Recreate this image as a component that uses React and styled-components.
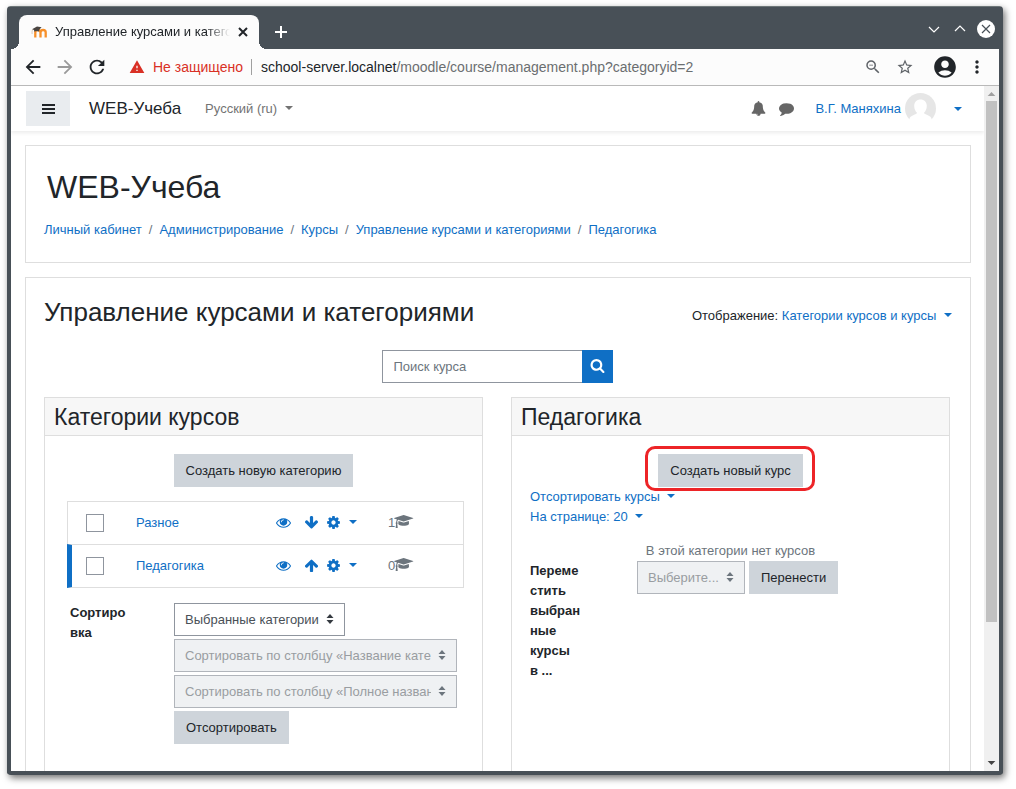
import React, { useState } from 'react';
import styled, { createGlobalStyle, css } from 'styled-components';
import {
  MdAccountCircle,
  MdAdd,
  MdArrowBack,
  MdArrowForward,
  MdMoreVert,
  MdRefresh,
  MdStarBorder,
  MdWarning,
  MdZoomOut,
} from 'react-icons/md';

const COLORS = {
  frame: '#485057',
  chrome: '#fcfcfc',
  text: '#212529',
  link: '#0f6fc5',
  muted: '#6c757d',
  button: '#ced4da',
  border: '#dedede',
  inputBorder: '#8f959e',
};

const ICON_PATHS = {
  bell:
    'M912 1696q0-16-16-16-59 0-101.5-42.5t-42.5-101.5q0-16-16-16t-16 16q0 73 51.5 124.5t124.5 51.5q16 0 16-16zm816-288q0 52-38 90t-90 38h-448q0 106-75 181t-181 75-181-75-75-181h-448q-52 0-90-38t-38-90q50-42 91-88t85-119.5 74.5-158.5 50-206 19.5-260q0-152 117-282.5t307-158.5q-8-19-8-39 0-40 28-68t68-28 68 28 28 68q0 20-8 39 190 28 307 158.5t117 282.5q0 139 19.5 260t50 206 74.5 158.5 85 119.5 91 88z',
  comment:
    'M1792 896q0 174-120 321.5t-326 233-450 85.5q-70 0-145-8-198 175-460 242-49 14-114 22-17 2-30.5-9t-17.5-29v-1q-3-4-.5-12t2-10 4.5-9.5l6-9 7-8.5 8-9q7-8 31-34.5t34.5-38 31-39.5 32.5-51 27-59 26-76q-157-89-247.5-220t-90.5-281q0-130 71-248.5t191-204.5 286-136.5 348-50.5q244 0 450 85.5t326 233 120 321.5z',
  eye:
    'M1664 960q-152-236-381-353 61 104 61 225 0 185-131.5 316.5t-316.5 131.5-316.5-131.5-131.5-316.5q0-121 61-225-229 117-381 353 133 205 333.5 326.5t434.5 121.5 434.5-121.5 333.5-326.5zm-720-384q0-20-14-34t-34-14q-125 0-214.5 89.5t-89.5 214.5q0 20 14 34t34 14 34-14 14-34q0-86 61-147t147-61q20 0 34-14t14-34zm848 384q0 34-20 69-140 230-376.5 368.5t-499.5 138.5-499.5-139-376.5-368q-20-35-20-69t20-69q140-229 376.5-368t499.5-139 499.5 139 376.5 368q20 35 20 69z',
  down:
    'M1675 832q0 53-37 90l-651 652q-39 37-91 37-53 0-90-37l-651-652q-38-36-38-90 0-53 38-91l74-75q39-37 91-37 53 0 90 37l294 294v-704q0-52 38-90t90-38h128q52 0 90 38t38 90v704l294-294q37-37 90-37 52 0 91 37l75 75q37 39 37 91z',
  up:
    'M1675 971q0 51-37 90l-75 75q-38 38-91 38-54 0-90-38l-294-293v704q0 52-37.5 84.5t-90.5 32.5h-128q-53 0-90.5-32.5t-37.5-84.5v-704l-294 293q-36 38-90 38t-90-38l-75-75q-38-38-38-90 0-53 38-91l651-651q35-37 90-37 54 0 91 37l651 651q37 39 37 91z',
  cog:
    'M1152 896q0-106-75-181t-181-75-181 75-75 181 75 181 181 75 181-75 75-181zm512-109v222q0 12-8 23t-20 13l-185 28q-19 54-39 91 35 50 107 138 10 12 10 25t-9 23q-27 37-99 108t-94 71q-12 0-26-9l-138-108q-44 23-91 38-16 136-29 186-7 28-36 28h-222q-14 0-24.5-8.5t-11.5-21.5l-28-184q-49-16-90-37l-141 107q-10 9-25 9-14 0-25-11-126-114-165-168-7-10-7-23 0-12 8-23 15-21 51-66.5t54-70.5q-27-50-41-99l-183-27q-13-2-21-12.5t-8-23.5v-222q0-12 8-23t19-13l186-28q14-46 39-92-40-57-107-138-10-12-10-24 0-10 9-23 26-36 98.5-107.5t94.5-71.5q13 0 26 10l138 107q44-23 91-38 16-136 29-186 7-28 36-28h222q14 0 24.5 8.5t11.5 21.5l28 184q49 16 90 37l142-107q9-9 24-9 13 0 25 10 129 119 165 170 7 8 7 22 0 12-8 23-15 21-51 66.5t-54 70.5q26 50 41 98l183 28q13 2 21 12.5t8 23.5z',
  search:
    'M1216 832q0-185-131.5-316.5t-316.5-131.5-316.5 131.5-131.5 316.5 131.5 316.5 316.5 131.5 316.5-131.5 131.5-316.5zm512 832q0 52-38 90t-90 38q-54 0-90-38l-343-342q-179 124-399 124-143 0-273.5-55.5t-225-150-150-225-55.5-273.5 55.5-273.5 150-225 225-150 273.5-55.5 273.5 55.5 225 150 150 225 55.5 273.5q0 220-124 399l343 343q37 37 37 90z',
  cap:
    'M1774 836l18 316q4 69-82 128t-235 93.5-323 34.5-323-34.5-235-93.5-82-128l18-316 574 181q22 7 48 7t48-7zm530-324q0 23-22 31l-1120 352q-4 1-10 1t-10-1l-652-206q-43 34-71 111.5t-34 178.5q63 36 63 109 0 69-58 107l58 433q2 14-8 25-9 11-24 11h-192q-15 0-24-11-10-11-8-25l58-433q-58-38-58-107 0-73 65-111 11-207 98-330l-333-104q-22-8-22-31t22-31l1120-352q4-1 10-1t10 1l1120 352q22 8 22 31z',
};

const Icon = ({ name, size = 15 }) => {
  const units = name === 'cap' ? 2304 : 1792;

  return (
    <svg
      width={(size * units) / 1792}
      height={size}
      viewBox={`0 0 ${units} 1792`}
      fill="currentColor"
      aria-hidden="true"
    >
      <path d={ICON_PATHS[name]} />
    </svg>
  );
};

const MoodleLogo = () => (
  <svg width="17" height="14" viewBox="0 0 17 14" aria-hidden="true">
    <path
      d="M4.3 12.5V7.6a2.6 2.6 0 0 1 5.2 0v4.9M9.5 12.5V7.6a2.6 2.6 0 0 1 5.2 0v4.9"
      fill="none"
      stroke="#f7902a"
      strokeWidth="2.3"
    />
    <path d="M1 4.3 6 1.6l4.6.6-2.2 2.2-.4 2.2C6 5.600 4.400 5.900 3.400 6.800L3 4.900z" fill="#4a4542" />
    <path d="M1.500 4.400C1 6 .9 7.500 1.100 9" fill="none" stroke="#c9b7a4" strokeWidth=".7" />
  </svg>
);

const Avatar = () => (
  <svg width="31" height="31" viewBox="0 0 31 31" aria-hidden="true">
    <circle cx="15.500" cy="15.500" r="15.500" fill="#e6e6e6" />
    <path
      d="M15.500 6.500c3.700 0 6.300 2.600 6.300 6.200 0 3.500-1.300 5.600-3 7.200 1.300 1.500 4.600 1.900 6.600 3.900 1.100 1.100 1.600 3 1.900 4.700L24 31H7l-3.300-2.500c.3-1.700.8-3.600 1.900-4.700 2-2 5.300-2.400 6.600-3.900-1.700-1.600-3-3.700-3-7.200 0-3.600 2.600-6.200 6.300-6.200z"
      fill="#fff"
    />
  </svg>
);

const Select = ({ id, label, value, disabled, wide }) => (
  <SelectBox $wide={wide} $disabled={disabled}>
    <SelectField id={id} aria-label={label} disabled={disabled}>
      <option>{value}</option>
    </SelectField>
    <svg width="8" height="10" viewBox="0 0 8 10" aria-hidden="true">
      <path d="M4 0 7.500 4h-7zM.5 6h7L4 10z" fill="currentColor" />
    </svg>
  </SelectBox>
);

const BREADCRUMBS = [
  'Личный кабинет',
  'Администрирование',
  'Курсы',
  'Управление курсами и категориями',
  'Педагогика',
];

const CATEGORIES = [
  { name: 'Разное', courses: 1, move: 'down' },
  { name: 'Педагогика', courses: 0, move: 'up', isSelected: true },
];

const BrowserChrome = () => (
  <>
    <TitleBar>
      <Tab>
        <MoodleLogo />
        <TabTitle>Управление курсами и категориями</TabTitle>
        <PlainButton aria-label="Закрыть вкладку">
          <svg width="14" height="14" viewBox="0 0 14 14">
            <path d="m3 3 8 8m0-8-8 8" stroke="currentColor" strokeWidth="2" />
          </svg>
        </PlainButton>
      </Tab>
      <NewTab aria-label="Новая вкладка">
        <svg width="20" height="20" viewBox="0 0 20 20">
          <path d="M10 4v12M4 10h12" stroke="currentColor" strokeWidth="2" />
        </svg>
      </NewTab>
      <WindowButtons>
        <PlainButton aria-label="Свернуть">
          <svg width="12" height="12" viewBox="0 0 12 12">
            <path d="m1 4 5 5 5-5" fill="none" stroke="#fff" strokeWidth="1.200" />
          </svg>
        </PlainButton>
        <PlainButton aria-label="Развернуть">
          <svg width="12" height="12" viewBox="0 0 12 12">
            <path d="m1 8 5-5 5 5" fill="none" stroke="#fff" strokeWidth="1.200" />
          </svg>
        </PlainButton>
        <PlainButton aria-label="Закрыть">
          <svg width="18" height="18" viewBox="0 0 18 18">
            <circle cx="9" cy="9" r="9" fill="#fff" />
            <path d="m5 5 8 8m0-8-8 8" stroke={COLORS.frame} strokeWidth="1.200" />
          </svg>
        </PlainButton>
      </WindowButtons>
    </TitleBar>

    <AddressBar>
      <NavButtons>
        <PlainButton aria-label="Назад">
          <MdArrowBack size={22} />
        </PlainButton>
        <PlainButton aria-label="Вперёд" disabled>
          <MdArrowForward size={22} color="#9a9a9a" />
        </PlainButton>
        <PlainButton aria-label="Обновить">
          <MdRefresh size={22} />
        </PlainButton>
      </NavButtons>
      <Warning>
        <MdWarning size={16} />
        Не защищено
      </Warning>
      <Url>
        school-server.localnet
        <span>/moodle/course/management.php?categoryid=2</span>
      </Url>
      <PlainButton aria-label="Масштаб">
        <MdZoomOut size={18} color="#5f6368" />
      </PlainButton>
      <PlainButton aria-label="В закладки">
        <MdStarBorder size={18} color="#5f6368" />
      </PlainButton>
      <ProfileButtons>
        <PlainButton aria-label="Профиль">
          <MdAccountCircle size={26} />
        </PlainButton>
        <PlainButton aria-label="Меню">
          <MdMoreVert size={20} />
        </PlainButton>
      </ProfileButtons>
    </AddressBar>
  </>
);

const SiteNav = () => (
  <NavBar>
    <MenuButton aria-label="Боковая панель">
      <svg width="13" height="10" viewBox="0 0 13 10">
        <path d="M0 0h13v2H0zM0 4h13v2H0zM0 8h13v2H0z" fill="currentColor" />
      </svg>
    </MenuButton>
    <Brand href="#home">WEB-Учеба</Brand>
    <Language href="#lang">
      Русский ‎(ru)‎ <Caret />
    </Language>
    <UserTools>
      <PlainButton aria-label="Уведомления">
        <Icon name="bell" />
      </PlainButton>
      <PlainButton aria-label="Сообщения">
        <Icon name="comment" />
      </PlainButton>
    </UserTools>
    <UserMenu href="#user">
      В.Г. Маняхина
      <Avatar />
      <Caret />
    </UserMenu>
  </NavBar>
);

const CategoryRow = ({ name, courses, move, isSelected }) => {
  const [isChecked, setChecked] = useState(false);

  return (
    <Row $isSelected={isSelected}>
      <Checkbox
        type="checkbox"
        aria-label={name}
        checked={isChecked}
        onChange={() => setChecked(!isChecked)}
      />
      <Link href="#category">{name}</Link>
      <Actions>
        <Link href="#hide" aria-label="Скрыть">
          <Icon name="eye" />
        </Link>
        <Link href="#move" aria-label="Переместить">
          <Icon name={move} />
        </Link>
        <Link href="#settings" aria-label="Настройки">
          <Icon name="cog" />
          <Caret />
        </Link>
      </Actions>
      <CourseCount>
        {courses}
        <Icon name="cap" />
      </CourseCount>
    </Row>
  );
};

const CategoriesPanel = () => (
  <Panel>
    <PanelTitle>Категории курсов</PanelTitle>
    <PanelBody>
      <Centered>
        <Button>Создать новую категорию</Button>
      </Centered>
      <CategoryList>
        {CATEGORIES.map(category => (
          <CategoryRow key={category.name} {...category} />
        ))}
      </CategoryList>
      <SortForm>
        <FormLabel htmlFor="sort-scope">Сортировка</FormLabel>
        <SortFields>
          <Select id="sort-scope" value="Выбранные категории" />
          <Select
            label="Сортировка категорий"
            value="Сортировать по столбцу «Название категории» по возрастанию"
            disabled
            wide
          />
          <Select
            label="Сортировка курсов"
            value="Сортировать по столбцу «Полное название курса» по возрастанию"
            disabled
            wide
          />
          <Button>Отсортировать</Button>
        </SortFields>
      </SortForm>
    </PanelBody>
  </Panel>
);

const CoursesPanel = () => (
  <Panel>
    <PanelTitle>Педагогика</PanelTitle>
    <PanelBody>
      <Centered>
        <Highlight>
          <Button>Создать новый курс</Button>
        </Highlight>
      </Centered>
      <Listing>
        <Link href="#sort">
          Отсортировать курсы <Caret />
        </Link>
        <Link href="#per-page">
          На странице: 20 <Caret />
        </Link>
      </Listing>
      <Empty>В этой категории нет курсов</Empty>
      <MoveForm>
        <FormLabel htmlFor="move-to">Переместить выбранные курсы в ...</FormLabel>
        <MoveFields>
          <Select id="move-to" value="Выберите..." disabled />
          <Button>Перенести</Button>
        </MoveFields>
      </MoveForm>
    </PanelBody>
  </Panel>
);

const App = () => (
  <>
    <GlobalStyle />
    <Desktop>
      <Window>
        <BrowserChrome />
        <Viewport>
          <Page>
            <SiteNav />
            <Content>
              <HeaderCard>
                <SiteTitle>WEB-Учеба</SiteTitle>
                <Breadcrumbs aria-label="Навигация">
                  {BREADCRUMBS.map(crumb => (
                    <Crumb key={crumb}>
                      <Link href="#crumb">{crumb}</Link>
                    </Crumb>
                  ))}
                </Breadcrumbs>
              </HeaderCard>

              <MainCard>
                <Heading>
                  <PageTitle>Управление курсами и категориями</PageTitle>
                  <ViewMode>
                    Отображение:{' '}
                    <Link href="#view">
                      Категории курсов и курсы <Caret />
                    </Link>
                  </ViewMode>
                </Heading>
                <SearchForm onSubmit={event => event.preventDefault()}>
                  <SearchField
                    type="text"
                    aria-label="Поиск курса"
                    placeholder="Поиск курса"
                  />
                  <SearchButton aria-label="Найти">
                    <Icon name="search" />
                  </SearchButton>
                </SearchForm>
                <Columns>
                  <CategoriesPanel />
                  <CoursesPanel />
                </Columns>
              </MainCard>
            </Content>
          </Page>
          <Scrollbar>
            <Arrow />
            <Thumb />
            <Arrow $down />
          </Scrollbar>
        </Viewport>
      </Window>
    </Desktop>
  </>
);

const GlobalStyle = createGlobalStyle`
  * {
    box-sizing: border-box;
  }

  body {
    margin: 0;
    background: #fff;
    color: ${COLORS.text};
    font: 13px/20px "Liberation Sans", Arial, sans-serif;
  }

  button, input, select {
    font: inherit;
    color: inherit;
  }

  svg {
    display: block;
    flex: none;
  }
`;

const Desktop = styled.div`
  height: 100vh;
  padding: 6px 13px 14px 7px;
`;

const Window = styled.div`
  display: flex;
  flex-direction: column;
  height: 100%;
  border: 4px solid ${COLORS.frame};
  border-top: 1px solid #6d7678;
  border-radius: 4px;
  background: ${COLORS.frame};
  box-shadow: 2px 3px 7px rgba(0, 0, 0, 0.55);
`;

const PlainButton = styled.button`
  display: flex;
  padding: 0;
  border: none;
  background: transparent;
`;

const TitleBar = styled.div`
  display: flex;
  align-items: flex-end;
  height: 42px;
  padding-left: 8px;
`;

const Tab = styled.div`
  position: relative;
  display: flex;
  align-items: center;
  width: 240px;
  height: 34px;
  padding: 0 9px 0 12px;
  border-radius: 8px 8px 0 0;
  background: ${COLORS.chrome};

  &::before,
  &::after {
    content: '';
    position: absolute;
    bottom: 0;
    width: 8px;
    height: 8px;
  }

  &::before {
    left: -8px;
    background: radial-gradient(circle at 0 0, transparent 8px, ${COLORS.chrome} 8px);
  }

  &::after {
    right: -8px;
    background: radial-gradient(circle at 100% 0, transparent 8px, ${COLORS.chrome} 8px);
  }
`;

const TabTitle = styled.span`
  flex: 1;
  margin: 0 6px 0 7px;
  overflow: hidden;
  white-space: nowrap;
  mask-image: linear-gradient(to left, transparent, #000 24px);
`;

const NewTab = styled(PlainButton)`
  align-self: center;
  margin: 8px 0 0 12px;
  color: #fff;
`;

const WindowButtons = styled.div`
  display: flex;
  align-items: center;
  align-self: center;
  gap: 14px;
  margin-left: auto;
  padding: 2px 4px 0 0;

  > :last-child {
    margin-left: -3px;
  }
`;

const AddressBar = styled.div`
  display: flex;
  align-items: center;
  gap: 14px;
  height: 37px;
  padding: 0 12px 0 11px;
  border-bottom: 1px solid #b9b9b9;
  background: ${COLORS.chrome};
  font-size: 14px;
`;

const NavButtons = styled.div`
  display: flex;
  gap: 10px;
`;

const Warning = styled.div`
  display: flex;
  align-items: center;
  gap: 8px;
  margin-left: 7px;
  color: #d93025;
`;

const Url = styled.div`
  flex: 1;
  margin-left: -6px;
  padding-left: 10px;
  background: linear-gradient(#a0a0a0, #a0a0a0) 0 50% / 1px 16px no-repeat;

  span {
    color: #6b6e70;
  }
`;

const ProfileButtons = styled.div`
  display: flex;
  align-items: center;
  gap: 9px;
  margin-left: 4px;
`;

const Viewport = styled.div`
  flex: 1;
  display: flex;
  min-height: 0;
  background: #fff;
`;

const Page = styled.div`
  flex: 1;
  min-width: 0;
  overflow: hidden;
`;

const NavBar = styled.nav`
  display: flex;
  align-items: center;
  height: 45px;
  padding: 0 22px 0 15px;
  box-shadow: 0 2px 4px rgba(0, 0, 0, 0.08);
`;

const MenuButton = styled(PlainButton)`
  align-items: center;
  justify-content: center;
  width: 44px;
  height: 35px;
  background: #e9ecef;
`;

const Brand = styled.a`
  margin-left: 19px;
  color: ${COLORS.text};
  font-size: 17px;
  text-decoration: none;
`;

const Language = styled.a`
  margin-left: 24px;
  color: #737373;
  text-decoration: none;
`;

const UserTools = styled.div`
  display: flex;
  gap: 13px;
  margin-left: auto;
  color: #666;
`;

const Link = styled.a`
  color: ${COLORS.link};
  text-decoration: none;
`;

const Caret = styled.span`
  display: inline-block;
  margin-left: 4px;
  vertical-align: 3px;
  border: 4px solid transparent;
  border-top-color: currentColor;
  border-bottom: 0;
`;

const UserMenu = styled(Link)`
  display: flex;
  align-items: center;
  gap: 4px;
  margin-left: 21px;

  ${Caret} {
    margin-left: 14px;
  }
`;

const Content = styled.main`
  display: flex;
  flex-direction: column;
  gap: 14px;
  padding: 14px 13px 14px 14px;
`;

const Card = styled.section`
  border: 1px solid ${COLORS.border};
  background: #fff;
`;

const HeaderCard = styled(Card)`
  padding: 22px 18px;
`;

const SiteTitle = styled.h1`
  margin: 0 3px 13px;
  font-size: 32px;
  font-weight: 400;
  line-height: 39px;
`;

const Breadcrumbs = styled.nav`
  display: flex;
`;

const Crumb = styled.span`
  & + &::before {
    content: '/';
    padding: 0 7px;
    color: ${COLORS.muted};
  }
`;

const MainCard = styled(Card)`
  padding: 18px 18px 0;
`;

const Heading = styled.div`
  display: flex;
  align-items: flex-start;
  justify-content: space-between;
  min-height: 38px;
`;

const ViewMode = styled.div`
  padding-top: 10px;
`;

const PageTitle = styled.h2`
  margin: 0;
  font-size: 26px;
  font-weight: 400;
  line-height: 32px;
`;

const SearchForm = styled.form`
  display: flex;
  justify-content: center;
  margin: 16px 0 14px;
  padding-right: 2px;
`;

const SearchField = styled.input`
  width: 200px;
  height: 33px;
  padding: 0 11px;
  border: 1px solid ${COLORS.inputBorder};
  border-right: 0;

  &::placeholder {
    color: ${COLORS.muted};
  }
`;

const SearchButton = styled(PlainButton)`
  align-items: center;
  justify-content: center;
  width: 31px;
  padding-bottom: 2px;
  background: ${COLORS.link};
  color: #fff;
`;

const Columns = styled.div`
  display: grid;
  grid-template-columns: 1fr 1fr;
  gap: 28px;
  padding-right: 2px;
`;

const Panel = styled.section`
  min-width: 0;
  min-height: 420px;
  border: 1px solid ${COLORS.border};
`;

const PanelTitle = styled.h3`
  margin: 0;
  padding: 4px 9px 2px;
  border-bottom: 1px solid ${COLORS.border};
  background: #f7f7f7;
  font-size: 23px;
  font-weight: 400;
  line-height: 31px;
`;

const PanelBody = styled.div`
  padding: 18px;
`;

const Centered = styled.div`
  display: flex;
  justify-content: center;
`;

const Button = styled.button`
  height: 33px;
  padding: 0 12px;
  border: none;
  background: ${COLORS.button};
`;

const Highlight = styled.div`
  position: relative;

  &::after {
    content: '';
    position: absolute;
    inset: -8px -12px -4px -13px;
    border: 3px solid #ed2427;
    border-radius: 10px;
    pointer-events: none;
  }
`;

const CategoryList = styled.div`
  margin: 14px 0 15px 4px;
`;

const Row = styled.div`
  display: grid;
  grid-template-columns: 50px 1fr 112px 75px;
  align-items: center;
  height: 44px;
  padding-left: 18px;
  border: 1px solid ${COLORS.border};

  & + & {
    margin-top: -1px;
  }

  ${props =>
    props.$isSelected &&
    css`
      padding-left: 14px;
      border-left: 5px solid ${COLORS.link};
    `}
`;

const Checkbox = styled.input`
  appearance: none;
  width: 18px;
  height: 18px;
  margin: 0;
  border: 1px solid ${COLORS.inputBorder};
  background: #fff;

  &:checked {
    background: ${COLORS.link};
  }
`;

const Actions = styled.div`
  display: flex;
  gap: 13px;
  padding-bottom: 2px;

  ${Link} {
    display: flex;
    align-items: center;
    gap: 4px;
  }

  > :last-child {
    margin-left: -6px;
  }
`;

const CourseCount = styled.div`
  display: flex;
  align-items: center;
  color: ${COLORS.muted};

  svg {
    margin: 0 0 3px -1px;
  }
`;

const SortForm = styled.form`
  display: grid;
  grid-template-columns: 58px minmax(0, 283px);
  gap: 46px;
  padding: 0 7px;
`;

const FormLabel = styled.label`
  overflow-wrap: anywhere;
  font-weight: 700;
`;

const SortFields = styled.div`
  display: flex;
  flex-direction: column;
  align-items: flex-start;
  gap: 3px;
`;

const SelectBox = styled.div`
  position: relative;
  max-width: 100%;
  width: ${props => (props.$wide ? '100%' : 'auto')};
  color: ${props => (props.$disabled ? COLORS.muted : '#343a40')};

  svg {
    position: absolute;
    top: 11px;
    right: 11px;
    pointer-events: none;
  }
`;

const SelectField = styled.select`
  appearance: none;
  width: 100%;
  height: 33px;
  padding: 0 25px 0 10px;
  border: 1px solid ${COLORS.inputBorder};
  border-radius: 0;
  background: #fff;
  color: #495057;

  &:disabled {
    border-color: #b1b5bb;
    background: #eff1f3;
    color: #999da1;
    opacity: 1;
  }
`;

const Listing = styled.div`
  display: flex;
  flex-direction: column;
  align-items: flex-start;
`;

const Empty = styled.p`
  margin: 14px 0 0;
  color: ${COLORS.muted};
  text-align: center;
`;

const MoveForm = styled.form`
  display: grid;
  grid-template-columns: 51px 1fr;
  gap: 56px;
`;

const MoveFields = styled.div`
  display: flex;
  align-items: flex-start;
  gap: 4px;
`;

const Scrollbar = styled.div`
  display: flex;
  flex-direction: column;
  width: 15px;
  padding: 0 2px;
  background: #f0f0f0;
`;

const Arrow = styled.div`
  flex: none;
  height: 15px;
  margin-top: ${props => (props.$down ? 'auto' : '0')};
  background: ${props => (props.$down ? '#444' : '#a0a0a0')};
  clip-path: ${props =>
    props.$down
      ? 'polygon(15% 5px, 85% 5px, 50% 9px)'
      : 'polygon(15% 10px, 85% 10px, 50% 6px)'};
`;

const Thumb = styled.div`
  height: 76%;
  background: #c1c1c1;
`;

export default App;
